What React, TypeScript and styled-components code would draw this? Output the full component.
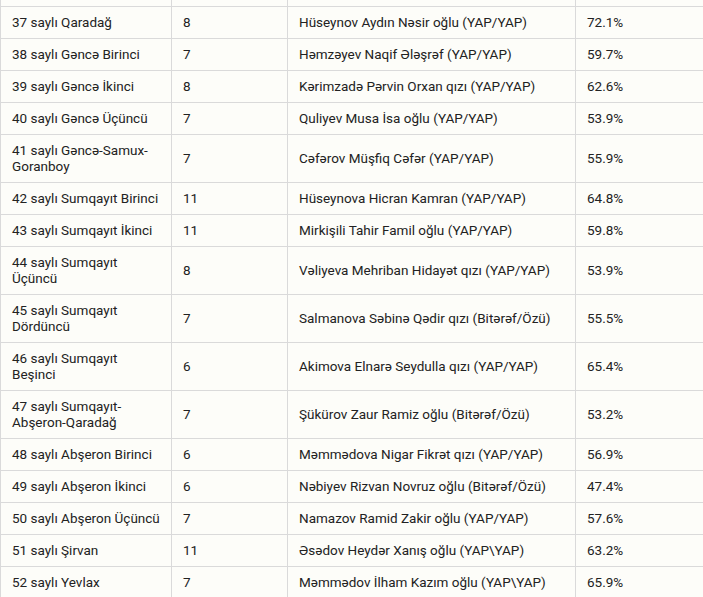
import React from "react";
import styled, { createGlobalStyle } from "styled-components";

const GlobalStyle = createGlobalStyle`
  html, body {
    margin: 0;
    padding: 0;
    background: #fdfdf9;
    overflow: hidden;
  }
`;

const Page = styled.div`
  width: 703px;
  height: 597px;
  overflow: hidden;
  background: #fdfdf9;
`;

const Table = styled.table`
  border-collapse: collapse;
  table-layout: fixed;
  width: 760px;
  font-family: Roboto, "Liberation Sans", sans-serif;
  font-size: 13.5px;
  line-height: 16px;
  color: #222;
`;

const Cell = styled.td<{ $spacer?: boolean }>`
  border: 1px solid #dadada;
  border-top: ${(p) => (p.$spacer ? "none" : "1px solid #dadada")};
  padding: ${(p) => (p.$spacer ? "0 11px" : "7px 11px 8px")};
  height: ${(p) => (p.$spacer ? "6px" : "auto")};
  vertical-align: middle;
  text-align: left;
`;

type Row = [string, string, string, string];

const rows: Row[] = [
  ["37 saylı Qaradağ", "8", "Hüseynov Aydın Nəsir oğlu (YAP/YAP)", "72.1%"],
  ["38 saylı Gəncə Birinci", "7", "Həmzəyev Naqif Ələşrəf (YAP/YAP)", "59.7%"],
  ["39 saylı Gəncə İkinci", "8", "Kərimzadə Pərvin Orxan qızı (YAP/YAP)", "62.6%"],
  ["40 saylı Gəncə Üçüncü", "7", "Quliyev Musa İsa oğlu (YAP/YAP)", "53.9%"],
  ["41 saylı Gəncə-Samux-Goranboy", "7", "Cəfərov Müşfiq Cəfər (YAP/YAP)", "55.9%"],
  ["42 saylı Sumqayıt Birinci", "11", "Hüseynova Hicran Kamran (YAP/YAP)", "64.8%"],
  ["43 saylı Sumqayıt İkinci", "11", "Mirkişili Tahir Famil oğlu (YAP/YAP)", "59.8%"],
  ["44 saylı Sumqayıt Üçüncü", "8", "Vəliyeva Mehriban Hidayət qızı (YAP/YAP)", "53.9%"],
  ["45 saylı Sumqayıt Dördüncü", "7", "Salmanova Səbinə Qədir qızı (Bitərəf/Özü)", "55.5%"],
  ["46 saylı Sumqayıt Beşinci", "6", "Akimova Elnarə Seydulla qızı (YAP/YAP)", "65.4%"],
  ["47 saylı Sumqayıt-Abşeron-Qaradağ", "7", "Şükürov Zaur Ramiz oğlu (Bitərəf/Özü)", "53.2%"],
  ["48 saylı Abşeron Birinci", "6", "Məmmədova Nigar Fikrət qızı (YAP/YAP)", "56.9%"],
  ["49 saylı Abşeron İkinci", "6", "Nəbiyev Rizvan Novruz oğlu (Bitərəf/Özü)", "47.4%"],
  ["50 saylı Abşeron Üçüncü", "7", "Namazov Ramid Zakir oğlu (YAP/YAP)", "57.6%"],
  ["51 saylı Şirvan", "11", "Əsədov Heydər Xanış oğlu (YAP\\YAP)", "63.2%"],
  ["52 saylı Yevlax", "7", "Məmmədov İlham Kazım oğlu (YAP\\YAP)", "65.9%"],
];

export default function App() {
  return (
    <>
      <GlobalStyle />
      <Page>
        <Table>
          <colgroup>
            <col style={{ width: 171 }} />
            <col style={{ width: 116 }} />
            <col style={{ width: 288 }} />
            <col style={{ width: 185 }} />
          </colgroup>
          <tbody>
            <tr>
              <Cell $spacer />
              <Cell $spacer />
              <Cell $spacer />
              <Cell $spacer />
            </tr>
            {rows.map((r) => (
              <tr key={r[0]}>
                <Cell>{r[0]}</Cell>
                <Cell>{r[1]}</Cell>
                <Cell>{r[2]}</Cell>
                <Cell>{r[3]}</Cell>
              </tr>
            ))}
          </tbody>
        </Table>
      </Page>
    </>
  );
}
